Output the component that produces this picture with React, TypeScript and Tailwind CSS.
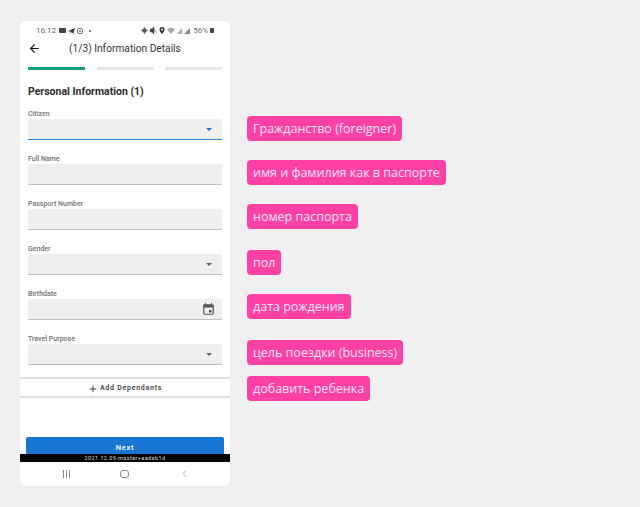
import { ArrowLeft, Plus, ChevronLeft } from 'lucide-react';

const fields = [
  { label: 'Citizen', kind: 'select', active: true },
  { label: 'Full Name', kind: 'text' },
  { label: 'Passport Number', kind: 'text' },
  { label: 'Gender', kind: 'select' },
  { label: 'Birthdate', kind: 'date' },
  { label: 'Travel Purpose', kind: 'select' },
];

const notes = [
  { text: 'Гражданство (foreigner)', className: 'mt-0' },
  { text: 'имя и фамилия как в паспорте', className: 'mt-[19px]' },
  { text: 'номер паспорта', className: 'mt-[19px]' },
  { text: 'пол', className: 'mt-[21px]' },
  { text: 'дата рождения', className: 'mt-[19px]' },
  { text: 'цель поездки (business)', className: 'mt-[21px]' },
  { text: 'добавить ребенка', className: 'mt-[11px]' },
];

function StatusBar() {
  return (
    <div className="flex h-[18px] items-center justify-between pr-[16px] pl-[16px] pt-[1px] text-[8px] text-[#666]">
      <div className="flex items-center gap-[2px]">
        <span className="mr-[1px]">16:12</span>
        <span className="h-[5px] w-[7px] rounded-[1px] bg-[#444]" />
        <svg width="7" height="6" viewBox="0 0 7 6"><path d="M0 3 7 0 5.500 6 3.500 4 3 6 2.500 3.800z" fill="#444" /></svg>
        <svg width="6" height="6" viewBox="0 0 6 6"><rect x=".5" y=".5" width="5" height="5" rx="1.500" fill="none" stroke="#777" /><circle cx="3" cy="3" r="1" fill="#777" /></svg>
        <span className="ml-[4px] h-[2px] w-[2px] rounded-full bg-[#555]" />
      </div>
      <div className="flex items-center gap-[2px]">
        <svg width="7" height="7" viewBox="0 0 7 7"><circle cx="3.500" cy="3.500" r="2.300" fill="#555" /><path d="M3.500 0v7M0 3.500h7" stroke="#555" strokeWidth=".7" /></svg>
        <svg width="7" height="7" viewBox="0 0 7 7"><path d="M0 2h2l2-2v7L2 5H0zM4 2l3 4" fill="#444" stroke="#444" strokeWidth=".6" /></svg>
        <svg width="6" height="7" viewBox="0 0 6 7"><path d="M3 0a2.500 2.500 0 0 1 2.500 2.500C5.500 4.300 3 7 3 7S.5 4.300.5 2.500A2.500 2.500 0 0 1 3 0z" fill="#333" /><circle cx="3" cy="2.500" r="1" fill="#fff" /></svg>
        <svg width="8" height="7" viewBox="0 0 8 7"><path d="M0 2.500a5.500 5.500 0 0 1 8 0L4 7z" fill="#aaa" /></svg>
        <svg width="5" height="6" viewBox="0 0 5 6"><path d="M0 6 5 0v6z" fill="#aaa" /></svg>
        <svg width="6" height="6" viewBox="0 0 6 6"><path d="M0 6 6 0v6z" fill="#888" /></svg>
        <span className="ml-[1px]">56%</span>
        <span className="h-[5px] w-[4px] rounded-[1px] bg-[#444]" />
      </div>
    </div>
  );
}

function Field({ label, kind, active }: { label: string; kind: string; active?: boolean }) {
  return (
    <div className="h-[45px]">
      <p className="h-[9px] text-[7px] leading-[9px] font-medium text-[#707070]">{label}</p>
      <div className={`flex h-[21px] items-center justify-end rounded-t-[2px] border-b bg-[#efefef] pr-[9px] ${active ? 'border-[#2b84d8]' : 'border-[#c0c0c0]'}`}>
        {kind === 'select' ? (
          <span className={`mr-[1px] h-0 w-0 border-x-[3px] border-t-[3px] border-x-transparent ${active ? 'border-t-[#1976d2]' : 'border-t-[#666]'}`} />
        ) : null}
        {kind === 'date' ? (
          <svg width="11" height="12" viewBox="0 0 11 12" className="-mr-[1px]">
            <path d="M2.500 0v2M8.500 0v2" stroke="#555" />
            <rect x=".75" y="1.750" width="9.500" height="9.500" rx="1" fill="none" stroke="#555" strokeWidth="1.200" />
            <rect x="1" y="2" width="9" height="2.500" fill="#555" />
            <rect x="6" y="7" width="2.500" height="2.500" fill="#555" />
          </svg>
        ) : null}
      </div>
    </div>
  );
}

export default function App() {
  return (
    <div className="flex h-[507px] w-[640px] items-start overflow-hidden bg-[#f0f0f0] font-['Roboto',sans-serif]">
      <div className="mt-[21px] ml-[20px] flex h-[465px] w-[210px] flex-col overflow-hidden rounded-[6px] bg-white">
        <StatusBar />

        <div className="flex h-[19px] items-center pl-[8px]">
          <ArrowLeft size={13} strokeWidth={2} className="text-[#111]" />
          <span className="ml-[28px] text-[10.2px] text-[#333]">(1/3) Information Details</span>
        </div>

        <div className="mt-[9px] flex justify-between pr-[8px] pl-[8px]">
          <div className="h-[3px] w-[57px] bg-[#0f9d84]" />
          <div className="h-[3px] w-[57px] bg-[#e6e6e6]" />
          <div className="h-[3px] w-[57px] bg-[#e6e6e6]" />
        </div>

        <h1 className="mt-[15px] pl-[8px] text-[10.5px] leading-[13px] font-bold text-[#2b2b2b]">Personal Information (1)</h1>

        <div className="mt-[12px] pr-[8px] pl-[8px]">
          {fields.map((f) => (
            <Field key={f.label} label={f.label} kind={f.kind} active={f.active} />
          ))}
        </div>

        <div className="-mt-[3px] flex h-[21px] items-center justify-center border-y-2 border-[#dedede] pt-[2px] text-[7px] font-medium tracking-[0.75px] text-[#333]">
          <Plus size={10} strokeWidth={2} className="mr-[2px] text-[#222]" />
          Add Dependants
        </div>

        <div className="h-[39px] shrink-0" />

        <div className="mx-[6px] flex h-[17px] shrink-0 items-center justify-center rounded-t-[2px] bg-[#1976d2] pt-[4px] text-[7.5px] font-medium tracking-[0.7px] text-white">
          Next
        </div>
        <div className="flex h-[8px] shrink-0 items-center justify-center bg-black text-[5.5px] tracking-[0.4px] text-[#ddd]">
          2021.12.09-master+aadab1d
        </div>

        <div className="flex flex-1 items-center justify-center gap-[50px] pl-[3px] pb-[1px] text-[#888]">
          <div className="flex gap-[2px]">
            <span className="h-[8px] w-[1px] bg-[#888]" />
            <span className="h-[8px] w-[1px] bg-[#888]" />
            <span className="h-[8px] w-[1px] bg-[#888]" />
          </div>
          <span className="h-[8px] w-[9px] rounded-[3px] border border-[#888]" />
          <ChevronLeft size={11} strokeWidth={1.5} />
        </div>
      </div>

      <div className="mt-[116px] ml-[17px] flex flex-col items-start font-['Open_Sans',sans-serif]">
        {notes.map((n) => (
          <div key={n.text} className={`flex h-[25px] items-center rounded-[4px] bg-[#ff40a5] px-[6px] pt-[1px] text-[12.5px] whitespace-nowrap text-[#ffe6f3] ${n.className}`}>
            {n.text}
          </div>
        ))}
      </div>
    </div>
  );
}
